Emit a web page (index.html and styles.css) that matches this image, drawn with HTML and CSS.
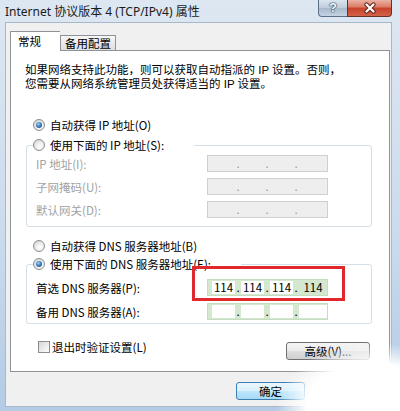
FILE: index.html
```html
<!DOCTYPE html>
<html lang="zh-CN">
<head>
<meta charset="utf-8">
<title>Internet 协议版本 4 (TCP/IPv4) 属性</title>
<link rel="stylesheet" href="styles.css">
</head>
<body>
<div class="window">
  <div class="titlebar">
    <span class="title">Internet 协议版本 4 (TCP/IPv4) 属性</span>
    <div class="caption-btns">
      <div class="cbtn help">?</div>
      <div class="cbtn close">
        <svg width="14" height="12" viewBox="0 0 14 12">
          <path d="M3.5 2.5 L10.5 9.5 M10.5 2.5 L3.5 9.5" stroke="#5a2118" stroke-width="4.2" stroke-linecap="round" fill="none"/>
          <path d="M3.5 2.5 L10.5 9.5 M10.5 2.5 L3.5 9.5" stroke="#ffffff" stroke-width="2.3" stroke-linecap="round" fill="none"/>
        </svg>
      </div>
    </div>
  </div>
  <div class="body">
    <div class="tabs">
      <div class="tab active">常规</div>
      <div class="tab">备用配置</div>
    </div>
    <div class="panel">
      <div class="intro">
        <div class="intro-line">如果网络支持此功能，则可以获取自动指派的 IP 设置。否则，</div>
        <div class="intro-line">您需要从网络系统管理员处获得适当的 IP 设置。</div>
      </div>
      <div class="radio-row r1"><span class="radio checked"></span><span>自动获得 IP 地址(O)</span></div>
      <fieldset class="group g1">
        <legend><span class="radio"></span><span>使用下面的 IP 地址(S):</span></legend>
        <div class="field-row disabled">
          <span class="lbl">IP 地址(I):</span>
          <div class="ip dis"><span class="seg"></span><span class="dot">.</span><span class="seg"></span><span class="dot">.</span><span class="seg"></span><span class="dot">.</span><span class="seg last"></span></div>
        </div>
        <div class="field-row disabled">
          <span class="lbl">子网掩码(U):</span>
          <div class="ip dis"><span class="seg"></span><span class="dot">.</span><span class="seg"></span><span class="dot">.</span><span class="seg"></span><span class="dot">.</span><span class="seg last"></span></div>
        </div>
        <div class="field-row disabled">
          <span class="lbl">默认网关(D):</span>
          <div class="ip dis"><span class="seg"></span><span class="dot">.</span><span class="seg"></span><span class="dot">.</span><span class="seg"></span><span class="dot">.</span><span class="seg last"></span></div>
        </div>
      </fieldset>
      <div class="radio-row r3"><span class="radio"></span><span>自动获得 DNS 服务器地址(B)</span></div>
      <fieldset class="group g2">
        <legend><span class="radio checked"></span><span>使用下面的 DNS 服务器地址(E):</span></legend>
        <div class="field-row dns">
          <span class="lbl">首选 DNS 服务器(P):</span>
          <div class="ip green">
            <span class="seg w">114</span><span class="dot">.</span><span class="seg w">114</span><span class="dot">.</span><span class="seg w">114</span><span class="dot">.</span><span class="seg last">114</span>
            <div class="redbox"></div>
          </div>
        </div>
        <div class="field-row dns">
          <span class="lbl">备用 DNS 服务器(A):</span>
          <div class="ip green"><span class="seg w"></span><span class="dot">.</span><span class="seg w"></span><span class="dot">.</span><span class="seg w"></span><span class="dot">.</span><span class="seg w last"></span></div>
        </div>
      </fieldset>
      <div class="bottom-row">
        <div class="check"><span class="checkbox"></span><span>退出时验证设置(L)</span></div>
        <div class="btn adv">高级(V)...</div>
      </div>
    </div>
    <div class="dlg-buttons">
      <div class="btn default">确定</div>
    </div>
  </div>
  <div class="fade"></div>
</div>
</body>
</html>
```

FILE: styles.css
```css
* { box-sizing: border-box; }
html, body { margin: 0; padding: 0; }
body {
  width: 400px;
  height: 411px;
  overflow: hidden;
  font-family: "Noto Sans CJK SC", "Noto Sans", sans-serif;
  font-size: 11.5px;
  color: #000;
}
.window {
  position: relative;
  width: 400px;
  height: 411px;
  padding: 0 8px 4px 5px;
  background: linear-gradient(180deg, #dde7f2 0%, #cbdcee 55%, #b3cbe5 100%);
  display: flex;
  flex-direction: column;
}
.titlebar {
  height: 22px;
  flex-shrink: 0;
  display: flex;
}
.title {
  font-family: "Noto Sans", "Noto Sans CJK SC", sans-serif;
  font-size: 12px;
  line-height: 22px;
  padding-top: 1px;
  color: #1b1b1b;
  white-space: nowrap;
}
.caption-btns {
  margin-left: auto;
  display: flex;
  height: 17px;
}
.cbtn {
  height: 17px;
  display: flex;
  align-items: center;
  justify-content: center;
  border: 1px solid #5d6f86;
  border-top: none;
}
.help {
  width: 29px;
  border-right: none;
  border-radius: 0 0 0 4px;
  background: linear-gradient(180deg, #dbe5ef 0%, #bfcddc 48%, #a9bacd 52%, #c4d3e2 100%);
  color: #f4f7fa;
  font-family: "Liberation Sans", sans-serif;
  font-weight: bold;
  font-size: 13px;
  line-height: 16px;
  text-shadow: 0 0 1px #2d3b4c, 0 0 1px #2d3b4c, 0 0 2px #45566b;
}
.close {
  width: 45px;
  border-color: #6a3026;
  border-radius: 0 0 4px 0;
  background: linear-gradient(180deg, #eab2a4 0%, #dc7d68 42%, #c7432c 52%, #d2624a 100%);
}
.body {
  flex: 1;
  background: #f0f0f0;
  border: 1px solid #a9b8c9;
  padding: 8px 0 0 4px;
  display: flex;
  flex-direction: column;
}
.tabs {
  display: flex;
  align-items: flex-end;
  height: 19px;
  position: relative;
  z-index: 1;
}
.tab {
  height: 15px;
  padding: 0 4px;
  border: 1px solid #8e9299;
  border-bottom: none;
  background: linear-gradient(180deg, #f7f7f7 0%, #ebebeb 50%, #dedede 100%);
  line-height: 14px;
  white-space: nowrap;
}
.tab.active {
  width: 50px;
  height: 20px;
  margin-bottom: -1px;
  padding-left: 7px;
  border-right: none;
  background: #fff;
  line-height: 19px;
}
.panel {
  width: 380px;
  height: 322px;
  border: 1px solid #8e9299;
  background: #fff;
  padding: 0 17px 0 14px;
  display: flex;
  flex-direction: column;
}
.intro {
  margin: 13px 0 0;
  font-family: "Liberation Sans", "Noto Sans CJK SC", sans-serif;
  white-space: nowrap;
}
.intro-line {
  height: 13.5px;
  line-height: 13.5px;
}
.radio-row {
  display: flex;
  align-items: center;
  gap: 5px;
  height: 16px;
  margin-left: 8px;
  white-space: nowrap;
}
.r1 { margin-top: 26px; }
.r3 { margin-top: 11px; }
.radio {
  display: inline-block;
  flex-shrink: 0;
  width: 12px;
  height: 12px;
  border-radius: 50%;
  border: 1px solid #8b8e92;
  background: radial-gradient(circle at 60% 65%, #ffffff 0%, #ececec 45%, #c9cbce 100%);
  position: relative;
}
.radio.checked::after {
  content: "";
  position: absolute;
  left: 2px;
  top: 2px;
  width: 6px;
  height: 6px;
  border-radius: 50%;
  background: radial-gradient(circle at 40% 35%, #a6d5f7 0%, #3e7fc0 45%, #163f6e 100%);
}
.group {
  width: 346px;
  margin: 4px 0 0 1px;
  padding: 2px 0 8px 9px;
  border: 1px solid #d5dfe5;
  border-radius: 3px;
  min-inline-size: 0;
}
.group legend {
  display: flex;
  align-items: center;
  gap: 5px;
  height: 16px;
  padding: 0 30px 0 0;
  margin-left: -3px;
  white-space: nowrap;
  background: #fff;
}
.g2 {
  margin-top: 2px;
  padding: 7px 0 4px 9px;
}
.field-row {
  display: grid;
  grid-template-columns: 171px 121px;
  align-items: center;
  height: 17px;
  white-space: nowrap;
}
.field-row + .field-row { margin-top: 6px; }
.field-row.dns { height: 16px; }
.field-row.dns + .field-row.dns { margin-top: 8px; }
.disabled .lbl { color: #a2a2a2; }
.ip {
  position: relative;
  display: flex;
  height: 100%;
  padding: 1px 0 1px 4px;
  line-height: 13px;
  font-size: 11.5px;
}
.ip.dis {
  border: 1px solid #cfcfcf;
  background: #eeeeee;
  color: #9a9a9a;
}
.ip.green {
  border: 1px solid #c4dcc0;
  background: #d4e8d0;
}
.seg {
  width: 23px;
  text-align: center;
}
.seg.last { flex: 1; }
.seg.w { background: #fdfefd; }
.dot {
  width: 6px;
  text-align: center;
}
.redbox {
  position: absolute;
  left: -16px;
  top: -14px;
  width: 153px;
  height: 35px;
  border: 3px solid #e1282c;
}
.bottom-row {
  display: flex;
  justify-content: space-between;
  align-items: flex-start;
  margin-top: 16px;
  padding: 0 2px 0 13px;
}
.check {
  display: flex;
  align-items: center;
  gap: 2px;
  height: 14px;
  white-space: nowrap;
}
.checkbox {
  width: 12px;
  height: 12px;
  border: 1px solid #8b8e92;
  background: linear-gradient(135deg, #d6d6d6 0%, #eeeeee 60%, #fbfbfb 100%);
}
.btn {
  height: 18px;
  border: 1px solid #707070;
  border-radius: 3px;
  background: linear-gradient(180deg, #f4f4f4 0%, #ebebeb 48%, #dddddd 52%, #cfcfcf 100%);
  text-align: center;
  line-height: 16px;
  white-space: nowrap;
}
.adv {
  width: 84px;
  margin-top: 2px;
}
.dlg-buttons {
  display: flex;
  margin-top: 10px;
  padding-left: 226px;
}
.default {
  width: 69px;
  border-color: #3c7fb1;
  background: linear-gradient(180deg, #eaf6fd 0%, #d9f0fc 48%, #bee6fd 52%, #a7d9f5 100%);
}
.fade {
  position: absolute;
  left: 260px;
  top: 320px;
  width: 140px;
  height: 91px;
  background: radial-gradient(ellipse 95px 66px at 112px 88px, #ffffff 0%, #ffffff 68%, rgba(255,255,255,0) 100%);
  pointer-events: none;
}
```
